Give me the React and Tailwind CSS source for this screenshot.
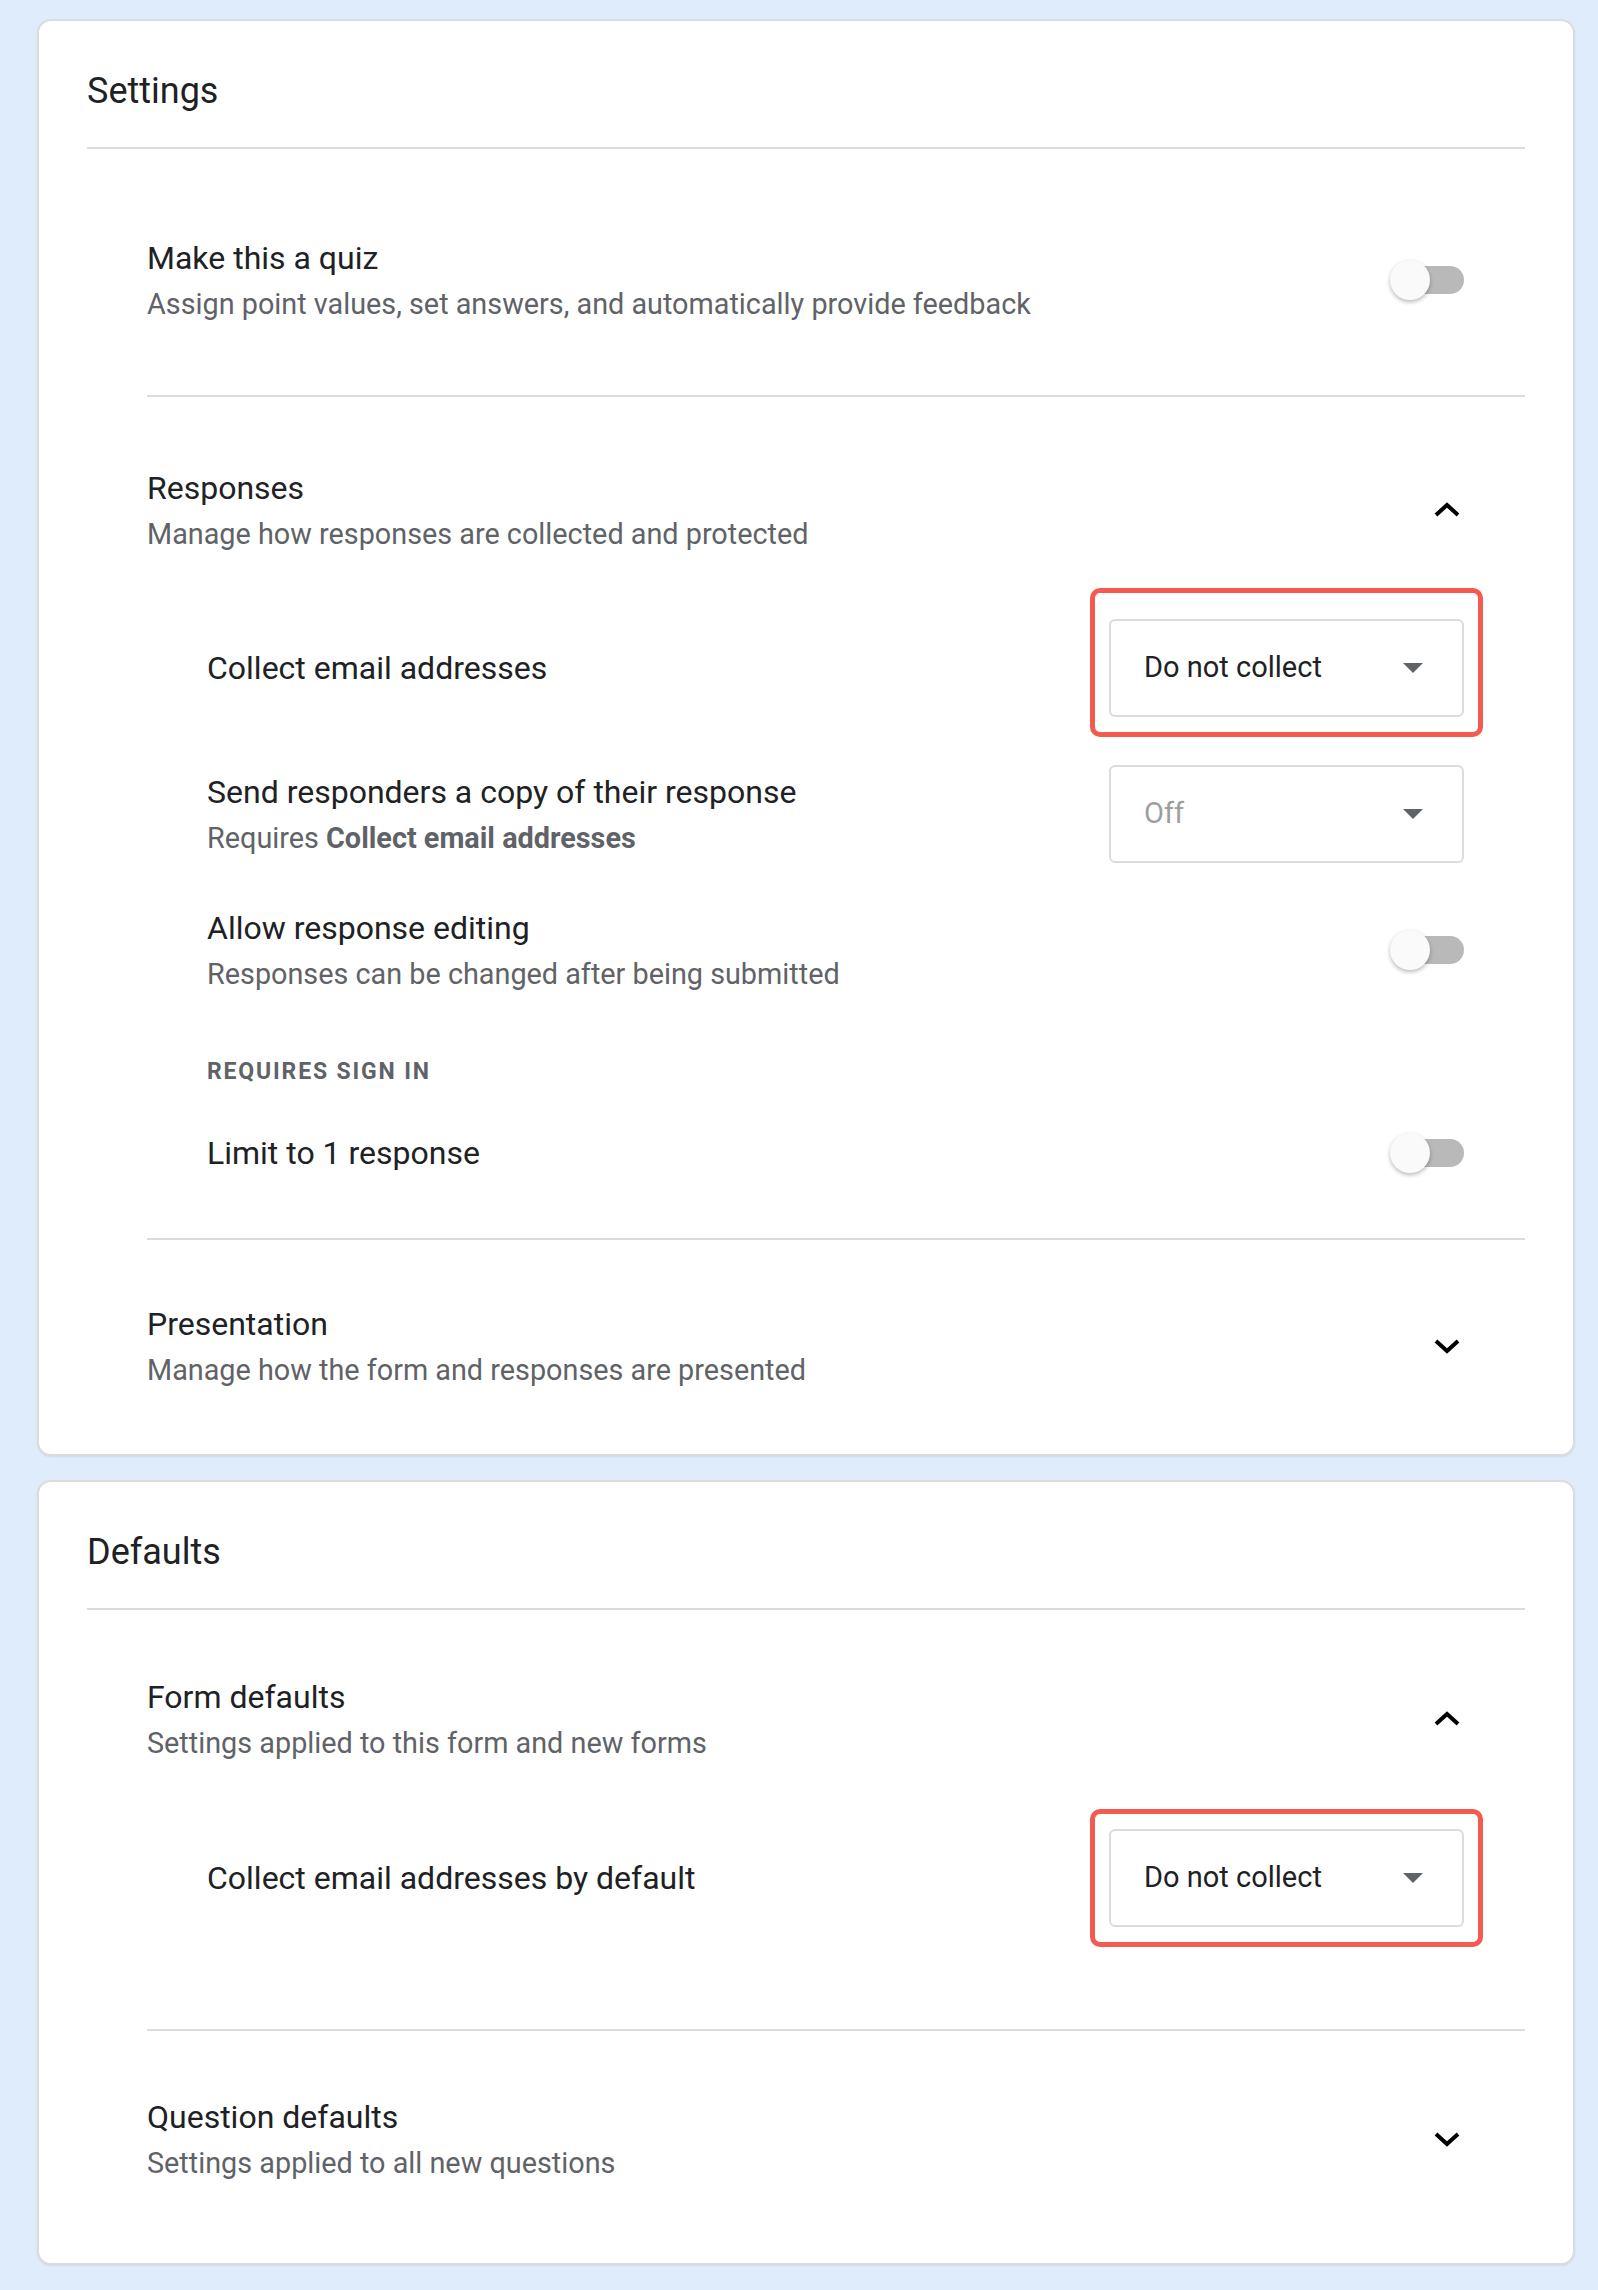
import React from "react";

const font = { fontFamily: "Roboto, 'Noto Sans', Arial, sans-serif" };

function Chevron({ up }) {
    return (
        <svg width="26" height="16" viewBox="0 0 26 16" className="mr-[4px]">
            <polyline
                points={up ? "2,13 13,3 24,13" : "2,3 13,13 24,3"}
                fill="none"
                stroke="#000"
                strokeWidth="4"
            />
        </svg>
    );
}

function Toggle() {
    return (
        <div className="relative w-[74px] h-[40px] shrink-0">
            <div className="absolute right-0 top-[6px] w-[66px] h-[28px] rounded-full bg-[#b9b9b9]" />
            <div className="absolute left-0 top-0 w-[40px] h-[40px] rounded-full bg-[#fafafa] shadow-[0_2px_4px_rgba(0,0,0,0.28)]" />
        </div>
    );
}

function Select({ value, muted, highlight, top = 20 }) {
    return (
        <div className="relative w-[355px] h-[98px] shrink-0">
            {highlight && (
                <div
                    className={
                        "absolute -left-[19px] -right-[19px] -bottom-[20px] border-[5px] border-[#f45b50] rounded-[10px] " +
                        (top === 31 ? "-top-[31px]" : "-top-[20px]")
                    }
                />
            )}
            <div className="relative h-full flex items-center justify-between pl-[33px] pr-[39px] border-2 border-[#dadce0] rounded-[6px] bg-white">
                <span className={"text-[29px] " + (muted ? "text-[#9e9e9e]" : "text-[#202124]")}>{value}</span>
                <svg width="20" height="10" viewBox="0 0 20 10">
                    <polygon points="0,0 20,0 10,10" fill="#5f6368" />
                </svg>
            </div>
        </div>
    );
}

function TextBlock({ title, desc }) {
    return (
        <div>
            <div className="text-[32px] leading-[36px] text-[#202124]">{title}</div>
            {desc && <div className="mt-[12px] text-[28.8px] leading-[32px] text-[#5f6368]">{desc}</div>}
        </div>
    );
}

function Divider() {
    return <div className="h-[2px] bg-[#dadce0]" />;
}

function Card({ title, children }) {
    return (
        <div className="bg-white border-2 border-[#dadce0] rounded-[14px] shadow-[0_1px_2px_rgba(0,0,0,0.08)] px-[48px] pt-[50px]">
            <h2 className="text-[36px] leading-[40px] text-[#202124] mb-[36px]">{title}</h2>
            <Divider />
            <div className="ml-[60px]">{children}</div>
        </div>
    );
}

export default function App() {
    return (
        <div style={font} className="min-h-screen bg-[#deecfc] pl-[37px] pr-[23px] pt-[19px] pb-[26px] flex flex-col gap-[24px]">
            <Card title="Settings">
                <div className="flex items-center justify-between pr-[61px] pt-[91px] pb-[75px]">
                    <TextBlock
                        title="Make this a quiz"
                        desc="Assign point values, set answers, and automatically provide feedback"
                    />
                    <Toggle />
                </div>
                <Divider />

                <div className="pr-[61px] pt-[73px] pb-[65px]">
                    <div className="flex items-center justify-between">
                        <TextBlock title="Responses" desc="Manage how responses are collected and protected" />
                        <Chevron up />
                    </div>

                    <div className="ml-[60px] mt-[69px]">
                        <div className="flex items-center justify-between">
                            <div className="text-[32px] leading-[36px] text-[#202124]">Collect email addresses</div>
                            <Select value="Do not collect" highlight top={31} />
                        </div>
                        <div className="flex items-center justify-between mt-[48px]">
                            <TextBlock
                                title="Send responders a copy of their response"
                                desc={
                                    <>
                                        Requires <span className="font-bold">Collect email addresses</span>
                                    </>
                                }
                            />
                            <Select value="Off" muted />
                        </div>
                        <div className="flex items-center justify-between mt-[47px]">
                            <TextBlock
                                title="Allow response editing"
                                desc="Responses can be changed after being submitted"
                            />
                            <Toggle />
                        </div>
                        <div className="mt-[68px] text-[23px] leading-[28px] font-bold tracking-[0.08em] text-[#5f6368]">
                            REQUIRES SIGN IN
                        </div>
                        <div className="flex items-center justify-between mt-[47px]">
                            <div className="text-[32px] leading-[36px] text-[#202124]">Limit to 1 response</div>
                            <Toggle />
                        </div>
                    </div>
                </div>
                <Divider />

                <div className="flex items-center justify-between pr-[61px] pt-[66px] pb-[68px]">
                    <TextBlock title="Presentation" desc="Manage how the form and responses are presented" />
                    <Chevron />
                </div>
            </Card>

            <Card title="Defaults">
                <div className="pr-[61px] pt-[69px] pb-[102px]">
                    <div className="flex items-center justify-between">
                        <TextBlock title="Form defaults" desc="Settings applied to this form and new forms" />
                        <Chevron up />
                    </div>
                    <div className="ml-[60px] mt-[70px] flex items-center justify-between">
                        <div className="text-[32px] leading-[36px] text-[#202124]">Collect email addresses by default</div>
                        <Select value="Do not collect" highlight />
                    </div>
                </div>
                <Divider />

                <div className="flex items-center justify-between pr-[61px] pt-[68px] pb-[84px]">
                    <TextBlock title="Question defaults" desc="Settings applied to all new questions" />
                    <Chevron />
                </div>
            </Card>
        </div>
    );
}
